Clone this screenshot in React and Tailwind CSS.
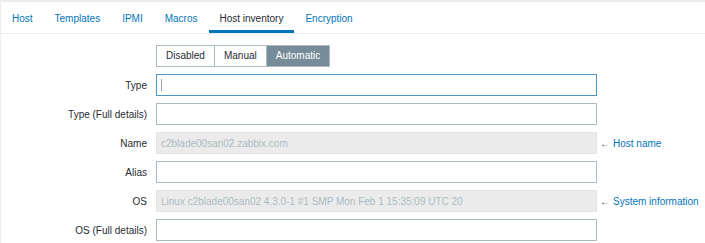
import { useState } from 'react';

const tabs = ['Host', 'Templates', 'IPMI', 'Macros', 'Host inventory', 'Encryption'];

const rows = [
  { label: 'Type', value: '', focused: true },
  { label: 'Type (Full details)', value: '' },
  { label: 'Name', value: 'c2blade00san02.zabbix.com', readOnly: true, link: 'Host name' },
  { label: 'Alias', value: '' },
  { label: 'OS', value: 'Linux c2blade00san02 4.3.0-1 #1 SMP Mon Feb 1 15:35:09 UTC 20', readOnly: true, link: 'System information' },
  { label: 'OS (Full details)', value: '' },
];

const modes = ['Disabled', 'Manual', 'Automatic'];

const App = () => {
  const [mode, setMode] = useState('Automatic');

  return (
    <div className="h-[243px] overflow-hidden bg-[#ebeef0] pt-[2px] pl-[1px] text-[10px] text-[#1f2c33]" style={{ fontFamily: '"Liberation Sans", Arial, sans-serif' }}>
      <div className="h-full bg-white">
        {/* tabs */}
        <ul className="flex border-b border-[#ebeef0]">
          {tabs.map((t) => (
            <li
              key={t}
              className={
                'h-[31px] px-[11px] pt-[9px] border-b-[3px] ' +
                (t === 'Host inventory'
                  ? 'border-[#0275b8] text-[#1f2c33]'
                  : 'border-transparent text-[#0275b8]')
              }
            >
              {t}
            </li>
          ))}
        </ul>

        {/* form */}
        <div className="grid grid-cols-[146px_441px_auto] gap-x-[9px] gap-y-[7px] pt-[11px] items-center">
          <div />
          <div className="flex h-[22px]">
            {modes.map((m, i) => (
              <button
                key={m}
                onClick={() => setMode(m)}
                className={
                  'h-[22px] px-[9px] border border-[#acbbc2] leading-none ' +
                  (i > 0 ? '-ml-px ' : '') +
                  (mode === m ? 'bg-[#768d99] border-[#768d99] text-white' : 'bg-white text-[#1f2c33]')
                }
              >
                {m}
              </button>
            ))}
          </div>
          <div />

          {rows.map((r) => (
            <FormRow key={r.label} {...r} />
          ))}
        </div>
      </div>
    </div>
  );
};

const FormRow = ({ label, value, focused, readOnly, link }) => (
  <>
    <label className="text-right whitespace-nowrap">{label}</label>
    <div className="relative">
      <input
        readOnly
        value={value}
        className={
          'h-[22px] w-full px-[4px] border outline-none text-[10px] ' +
          (readOnly
            ? 'bg-[#ebebeb] border-[#dfe4e7] text-[#acbbc2]'
            : focused
              ? 'bg-white border-[#4f94c9]'
              : 'bg-white border-[#acbbc2]')
        }
      />
      {focused && <span className="absolute left-[5px] top-[5px] h-[12px] w-px bg-[#9aa5ab]" />}
    </div>
    <div className="whitespace-nowrap -ml-[6px]">
      {link && (
        <span className="text-[#0275b8]">
          <span className="text-[#4f4f4f] mr-[3px]">←</span>
          {link}
        </span>
      )}
    </div>
  </>
);

export default App;
